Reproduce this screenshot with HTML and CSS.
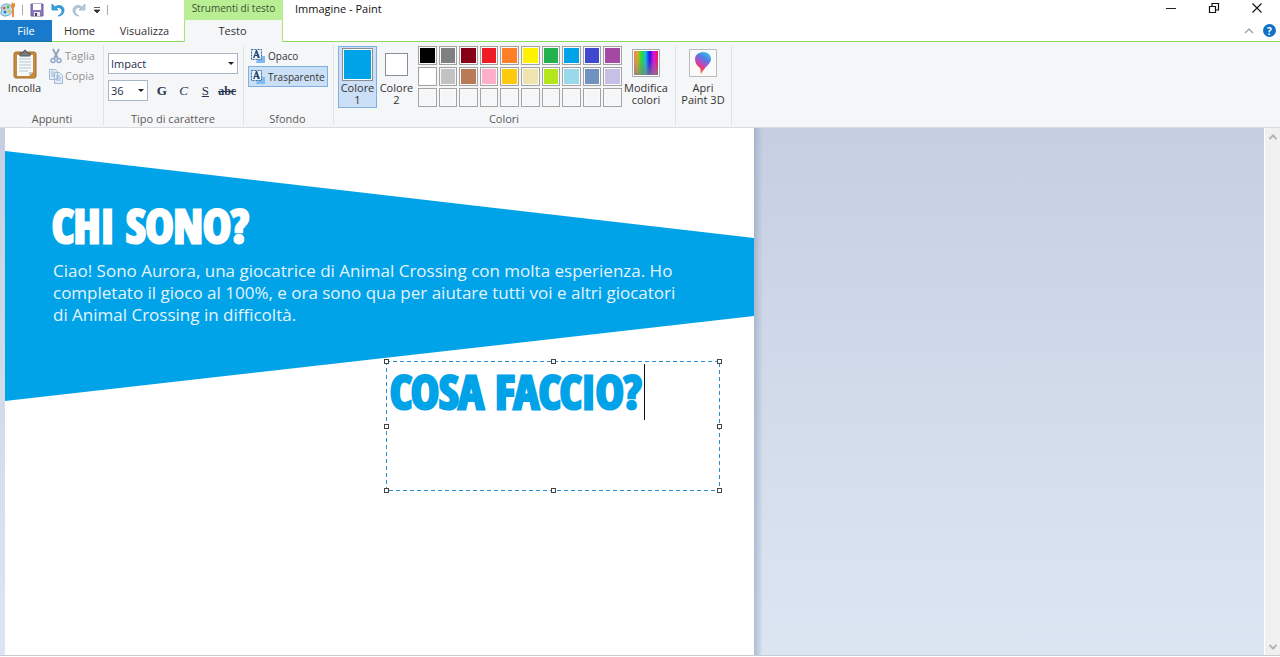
FILE: index.html
```html
<!DOCTYPE html>
<html lang="it">
<head>
<meta charset="utf-8">
<title>Immagine - Paint</title>
<link rel="stylesheet" href="styles.css">
</head>
<body>
<svg class="defs" aria-hidden="true">
  <defs>
    <linearGradient id="rainbow"><stop offset="0" stop-color="#f08070"/><stop offset=".15" stop-color="#d8b020"/><stop offset=".32" stop-color="#20e030"/><stop offset=".48" stop-color="#10c0e0"/><stop offset=".65" stop-color="#2010f0"/><stop offset=".82" stop-color="#e010e0"/><stop offset="1" stop-color="#f01850"/></linearGradient>
    <linearGradient id="fade" x2="0" y2="1"><stop offset="0" stop-color="#808080" stop-opacity="0"/><stop offset=".4" stop-color="#808080" stop-opacity=".1"/><stop offset="1" stop-color="#808080" stop-opacity=".75"/></linearGradient>
    <linearGradient id="drop" x1=".8" y1="0" x2=".3" y2="1"><stop offset="0" stop-color="#30c8f0"/><stop offset=".35" stop-color="#5878e0"/><stop offset=".55" stop-color="#b050c8"/><stop offset=".75" stop-color="#f03868"/><stop offset="1" stop-color="#f0a020"/></linearGradient>
    <symbol id="textbox" viewBox="0 0 16 16"><path d="M8 8h7v7H6z" fill="#7dbbf5"/><path d="M1.500 1.500h10v10h-10z" fill="#e8f2fd" stroke="#3d6b99" stroke-dasharray="2 1"/><path d="M3 10l3-8h1l3 8H7.500V9L7 8H5l-.5 2zM5.300 7h1.500L6 4.500z" fill="#24476f"/></symbol>
  </defs>
</svg>

<header class="titlebar">
  <div class="quick">
    <svg class="app-icon" width="17" height="18" viewBox="0 0 17 18"><path d="M1 6c2-4 9-4 11 0 2 5-2 9-7 9-3 0-5-2-4-4 1-1 0-3 0-5z" fill="#b9e0f5" stroke="#6d9fc0"/><circle cx="4" cy="7" r="1.500" fill="#e05a48"/><circle cx="8" cy="6" r="1.500" fill="#63b24b"/><circle cx="9" cy="10" r="1.500" fill="#ecc23b"/><circle cx="5" cy="11" r="1.500" fill="#3578c9"/><path d="M13 6v10" stroke="#e29242" stroke-width="2"/><path d="M11 5l1-4 2 2 1-2v4l-1 2h-2z" fill="#e98a2d"/></svg>
    <span class="sep"></span>
    <button class="tool" aria-label="Salva"><svg width="14" height="14" viewBox="0 0 14 14"><path d="M1 1h12v12H1z" fill="#8a76bd" stroke="#72609f"/><path d="M3 1h8v6H3z" fill="#fff"/><path d="M4 9h6v4H4z" fill="#e9e8ef"/><path d="M5 10h2v3H5z" fill="#46406c"/></svg></button>
    <button class="tool" aria-label="Annulla"><svg width="14" height="14" viewBox="0 0 14 14"><path d="M1 1v6h6L5 5c3-1 6 0 6 3 0 2-2 4-4 5 4 0 6-3 6-6 0-4-5-6-9-3z" fill="#38a3df" stroke="#238bc8" stroke-width=".8"/></svg></button>
    <button class="tool" aria-label="Ripeti"><svg width="14" height="14" viewBox="0 0 14 14"><path d="M13 1v6H7l2-2C6 4 3 5 3 8c0 2 2 4 4 5-4 0-6-3-6-6 0-4 5-6 9-3z" fill="#b8cbdd" stroke="#9cb5cb" stroke-width=".8"/></svg></button>
    <button class="tool more" aria-label="Personalizza"><svg width="8" height="8" viewBox="0 0 8 8"><path d="M1 1.500h6M1 4h6L4 7z" fill="#333" stroke="#333" stroke-width=".8"/></svg></button>
    <span class="sep"></span>
  </div>
  <div class="context">Strumenti di testo</div>
  <h1 class="title">Immagine - Paint</h1>
  <div class="window-buttons">
    <button aria-label="Riduci a icona"><svg width="12" height="12"><path d="M1 6.500h10" stroke="#222"/></svg></button>
    <button aria-label="Ripristina"><svg width="12" height="12"><path d="M1.500 4.500h6v6h-6zM4 4V1.500h6.500V8H8" fill="none" stroke="#111" stroke-width="1.200"/></svg></button>
    <button aria-label="Chiudi"><svg width="12" height="12"><path d="M1.500 1.500l9 9m0-9l-9 9" stroke="#111" stroke-width="1.100"/></svg></button>
  </div>
</header>

<nav class="tabs">
  <button class="tab file">File</button>
  <button class="tab home">Home</button>
  <button class="tab view">Visualizza</button>
  <button class="tab active">Testo</button>
  <div class="tab-end">
    <button aria-label="Comprimi barra multifunzione"><svg width="10" height="8"><path d="M1 6l4-4 4 4" fill="none" stroke="#999" stroke-width="1.200"/></svg></button>
    <button class="help" aria-label="Guida">?</button>
  </div>
</nav>

<section class="ribbon">
  <div class="group clipboard">
    <div class="controls">
      <button class="big paste"><svg width="24" height="30" viewBox="0 0 24 30"><rect x="1" y="3" width="22" height="26" rx="2" fill="#c58a3c" stroke="#a86f2a"/><path d="M4 6h16v17l-4 4H4z" fill="#f7fafc"/><path d="M6 10h12M6 13h12M6 16h12M6 19h12M6 22h9" stroke="#b4c5d2"/><path d="M20 23h-4v4z" fill="#bccbd6"/><path d="M7 7V4h3q2-6 4 0h3v3z" fill="#777d83" stroke="#555"/></svg><span>Incolla</span></button>
      <div class="stack">
        <button class="small off"><svg width="14" height="16" viewBox="1 0 14 16"><path d="M5 1l5 10M11 1L6 11" stroke="#8fa3bc" stroke-width="1.800"/><circle cx="5" cy="12.500" r="2" fill="none" stroke="#8fa9d0" stroke-width="1.500"/><circle cx="11" cy="12.500" r="2" fill="none" stroke="#8fa9d0" stroke-width="1.500"/></svg>Taglia</button>
        <button class="small off"><svg width="14" height="16" viewBox="1 0 14 16"><path d="M1.500 1.500h6l2 2v8h-8zM6.500 4.500h5l3 3v8h-8z" fill="#e4edf7" stroke="#a3bad6"/><path d="M3 4h3M3 6h3M3 8h3M8 8h4M8 10h5M8 12h5" stroke="#9ab6d8"/></svg>Copia</button>
      </div>
    </div>
    <div class="caption">Appunti</div>
  </div>
  <div class="group font">
    <div class="controls">
      <div class="combo"><select aria-label="Famiglia di caratteri"><option>Impact</option></select></div>
      <div class="font-row">
        <div class="combo size"><select aria-label="Dimensione carattere"><option>36</option></select></div>
        <button class="style bold" aria-label="Grassetto">G</button>
        <button class="style italic" aria-label="Corsivo">C</button>
        <button class="style underline" aria-label="Sottolineato">S</button>
        <button class="style strike" aria-label="Barrato">abc</button>
      </div>
    </div>
    <div class="caption">Tipo di carattere</div>
  </div>
  <div class="group background">
    <div class="controls">
      <button class="small mode"><svg width="16" height="16"><use href="#textbox"/></svg>Opaco</button>
      <button class="small mode chosen"><svg width="16" height="16"><use href="#textbox"/></svg>Trasparente</button>
    </div>
    <div class="caption">Sfondo</div>
  </div>
  <div class="group colors">
    <div class="controls">
      <button class="big color chosen"><i class="sample first"></i><span>Colore<br>1</span></button>
      <button class="big color"><i class="sample second"></i><span>Colore<br>2</span></button>
      <div class="palette">
        <button class="black" aria-label="Nero"></button><button class="gray" aria-label="Grigio"></button><button class="maroon" aria-label="Rosso scuro"></button><button class="red" aria-label="Rosso"></button><button class="orange" aria-label="Arancione"></button><button class="yellow" aria-label="Giallo"></button><button class="green" aria-label="Verde"></button><button class="cyan" aria-label="Turchese"></button><button class="indigo" aria-label="Indaco"></button><button class="purple" aria-label="Viola"></button>
        <button class="white" aria-label="Bianco"></button><button class="silver" aria-label="Grigio chiaro"></button><button class="brown" aria-label="Marrone"></button><button class="pink" aria-label="Rosa"></button><button class="gold" aria-label="Oro"></button><button class="cream" aria-label="Giallo chiaro"></button><button class="lime" aria-label="Verde limone"></button><button class="sky" aria-label="Turchese chiaro"></button><button class="slate" aria-label="Grigio blu"></button><button class="lavender" aria-label="Lavanda"></button>
        <button aria-label="Libero 1"></button><button aria-label="Libero 2"></button><button aria-label="Libero 3"></button><button aria-label="Libero 4"></button><button aria-label="Libero 5"></button><button aria-label="Libero 6"></button><button aria-label="Libero 7"></button><button aria-label="Libero 8"></button><button aria-label="Libero 9"></button><button aria-label="Libero 10"></button>
      </div>
      <button class="big edit"><svg width="28" height="28"><path d="M.5.5h27v27H.5z" fill="#fff" stroke="#aaa"/><path d="M2 2h24v24H2z" fill="url(#rainbow)"/><path d="M2 2h24v24H2z" fill="url(#fade)"/></svg><span>Modifica<br>colori</span></button>
    </div>
    <div class="caption">Colori</div>
  </div>
  <div class="group paint3d">
    <div class="controls">
      <button class="big"><svg width="28" height="28"><path d="M.5.5h27v27H.5z" fill="#fafafa" stroke="#bbb"/><path d="M14 3c5 0 8 3 8 7 0 5-6 7-10 15-1-2 0-4-1-6-3-2-5-5-5-9 0-4 4-7 8-7z" fill="url(#drop)"/></svg><span>Apri<br>Paint 3D</span></button>
    </div>
  </div>
</section>

<main class="workspace">
  <div class="canvas">
    <svg class="banner" viewBox="0 0 749 250" preserveAspectRatio="none"><path d="M0 0L749 87v78L0 250z" fill="#00a2e8"/></svg>
    <h2 class="heading about">CHI SONO?</h2>
    <p class="intro">Ciao! Sono Aurora, una giocatrice di Animal Crossing con molta esperienza. Ho<br>completato il gioco al 100%, e ora sono qua per aiutare tutti voi e altri giocatori<br>di Animal Crossing in difficoltà.</p>
    <div class="selection">
      <svg class="outline" width="100%" height="100%"><rect x="0" y="0" width="100%" height="100%" fill="none" stroke="#2a8fd0" stroke-width="2" stroke-dasharray="4 3"/></svg>
      <h2 class="heading">COSA FACCIO?</h2>
      <i class="caret"></i>
      <i class="grip n w"></i><i class="grip n c"></i><i class="grip n e"></i><i class="grip m w"></i><i class="grip m e"></i><i class="grip s w"></i><i class="grip s c"></i><i class="grip s e"></i>
    </div>
  </div>
  <div class="desk"></div>
  <div class="scrollbar">
    <button aria-label="Scorri su"><svg width="10" height="8"><path d="M1.500 6L5 2.500 8.500 6" fill="none" stroke="#b4b4b4" stroke-width="2"/></svg></button>
    <button aria-label="Scorri giù"><svg width="10" height="8"><path d="M1.500 2L5 5.500 8.500 2" fill="none" stroke="#b4b4b4" stroke-width="2"/></svg></button>
  </div>
</main>
</body>
</html>
```
FILE: styles.css
```css
* { box-sizing: border-box; }
body { margin: 0; min-height: 100vh; display: flex; flex-direction: column; background: #fff; color: #333; font: 11px/12px "Open Sans", "Noto Sans", sans-serif; overflow: hidden; }
button { margin: 0; padding: 0; border: 0; background: transparent; color: inherit; font: inherit; display: flex; align-items: center; justify-content: center; }
svg { display: block; flex: none; }
.defs { position: absolute; width: 0; height: 0; }

.titlebar { display: flex; height: 20px; }
.quick { display: flex; align-items: center; width: 184px; gap: 7px; }
.quick .app-icon { margin-right: -2px; }
.quick .sep { width: 1px; height: 10px; background: #aaa; }
.quick .more { width: 8px; }
.quick .sep:last-child { margin-left: -1px; }
.context { width: 99px; padding-top: 2px; background: #b9ee94; color: #3c5530; font-size: 10px; text-align: center; white-space: nowrap; }
.title { margin: 0; padding: 3px 12px; font: inherit; color: #111; }
.window-buttons { display: flex; margin-left: auto; padding-right: 2px; }
.window-buttons button { width: 43px; height: 16px; }

.tabs { display: flex; height: 22px; }
.tab { border-bottom: 1px solid #8edb62; }
.tab.file { width: 52px; background: #1979ca; color: #fff; border-bottom-color: #167b99; }
.tab.home { width: 55px; }
.tab.view { width: 77px; padding-right: 2px; }
.tab.active { width: 99px; padding-right: 2px; background: #f5f6f7; border: solid #a3e57b; border-width: 0 1px; }
.tab-end { flex: 1; display: flex; align-items: center; justify-content: flex-end; gap: 9px; padding-right: 4px; border-bottom: 1px solid #8edb62; }
.help { width: 13px; height: 13px; border-radius: 50%; background: #1072c6; color: #fff; font-size: 10px; font-weight: 700; }

.ribbon { display: flex; height: 86px; background: #f5f6f7; border-bottom: 1px solid #d9dbdd; }
.group { display: flex; flex-direction: column; justify-content: space-between; padding-bottom: 2px; background: linear-gradient(#e1e2e4, #e1e2e4) right 2px top 3px / 1px 80px no-repeat; }
.caption { text-align: center; color: #5c5c5c; }
.controls { display: flex; }
.big { flex-direction: column; justify-content: flex-start; gap: 4px; }
.small { gap: 2px; justify-content: flex-start; height: 20px; }
.off { color: #929292; }
.chosen { background: #cbe0f6; outline: 1px solid #7eb0e2; outline-offset: -1px; }

.clipboard { width: 106px; }
.clipboard .caption { padding-right: 2px; }
.paste { width: 49px; padding-top: 7px; gap: 3px; }
.stack { padding-top: 4px; }

.font { width: 140px; }
.font .controls { flex-direction: column; gap: 6px; padding: 11px 8px 0 2px; }
.font .caption { padding-right: 6px; }
.combo { position: relative; height: 21px; }
.combo select { appearance: none; width: 100%; height: 100%; padding: 0 2px; border: 1px solid #a8b4c8; border-radius: 0; background: #fff; color: #1e2c48; font: inherit; }
.combo::after { content: ""; position: absolute; right: 4px; top: 9px; border: 3px solid transparent; border-top-color: #222; }
.size { width: 40px; margin-right: 3px; }
.font-row { display: flex; }
.style { flex: 1; color: #28344f; font: 13px/20px "Liberation Serif", serif; }
.bold { font-weight: 700; }
.italic { font-style: italic; }
.underline { text-decoration: underline; }
.strike { font-size: 12px; font-weight: 700; text-decoration: line-through; }

.background { width: 90px; }
.background .controls { flex-direction: column; padding: 3px 8px 0 2px; }
.background .caption { padding-right: 7px; }
.mode { padding-left: 2px; height: 21px; font-size: 10px; }

.colors { width: 342px; }
.colors .controls { padding: 4px 0 0 2px; }
.colors .caption { padding-right: 6px; }
.color { width: 39px; height: 62px; padding-top: 2px; gap: 1px; }
.sample { border: 1px solid #8b8f94; box-shadow: inset 0 0 0 1px #fff; }
.first { width: 31px; height: 33px; background: #00a2e8; }
.second { width: 23px; height: 23px; margin: 5px 0; background: #fff; }
.palette { display: grid; width: 204px; grid-template-columns: repeat(10, 1fr); grid-auto-rows: 19px; column-gap: 2px; row-gap: 2px; align-content: start; margin-left: 2px; }
.palette button { border: 1px solid #a3a3a3; box-shadow: inset 0 0 0 1px #fafafa; }
.black { background: #000; } .gray { background: #7f7f7f; } .maroon { background: #880015; } .red { background: #ed1c24; } .orange { background: #ff7f27; }
.yellow { background: #fff200; } .green { background: #22b14c; } .cyan { background: #00a2e8; } .indigo { background: #3f48cc; } .purple { background: #a349a4; }
.white { background: #fff; } .silver { background: #c3c3c3; } .brown { background: #b97a57; } .pink { background: #ffaec9; } .gold { background: #ffc90e; }
.cream { background: #efe4b0; } .lime { background: #b5e61d; } .sky { background: #99d9ea; } .slate { background: #7092be; } .lavender { background: #c8bfe7; }
.edit { width: 48px; padding-top: 3px; gap: 5px; }

.paint3d { width: 56px; }
.paint3d .controls { padding-top: 7px; }
.paint3d .big { width: 50px; gap: 5px; }

.workspace { flex: 1; display: flex; border-bottom: 1px solid #c8ccd2; margin-bottom: 1px; padding-left: 5px; background: linear-gradient(#c5cfe1, #dce6f3); }
.canvas { position: relative; flex: 0 0 749px; background: #fff; }
.banner { position: absolute; left: 0; top: 23px; width: 100%; height: 250px; }
.heading { margin: 0; font: 700 47px/56px Impact, "Open Sans Condensed", sans-serif; white-space: nowrap; color: #00a2e8; -webkit-text-stroke: 3px; }
.about { position: absolute; left: 47px; top: 69px; color: #fff; }
.intro { position: absolute; left: 48px; top: 132px; margin: 0; color: #e4f5ff; font: 17px/22px "Open Sans", "Noto Sans", sans-serif; white-space: nowrap; }
.selection { position: absolute; left: 381px; top: 233px; width: 334px; height: 130px; padding: 2px 4px; }
.outline { position: absolute; inset: 0; }
.caret { position: absolute; left: 258px; top: 3px; width: 1px; height: 56px; background: #111; }
.grip { position: absolute; width: 5px; height: 5px; border: 1px solid #444; background: #fff; }
.n { top: -2px; } .m { top: 63px; } .s { bottom: -2px; }
.w { left: -2px; } .c { left: 165px; } .e { right: -2px; }
.desk { flex: 1; background: linear-gradient(90deg, #8fa3bd99, #a9b8ce55 6px, transparent 9px); }
.scrollbar { width: 16px; display: flex; flex-direction: column; justify-content: space-between; background: #f0f0f0; border-left: 1px solid #fff; }
.scrollbar button { height: 17px; }
```
